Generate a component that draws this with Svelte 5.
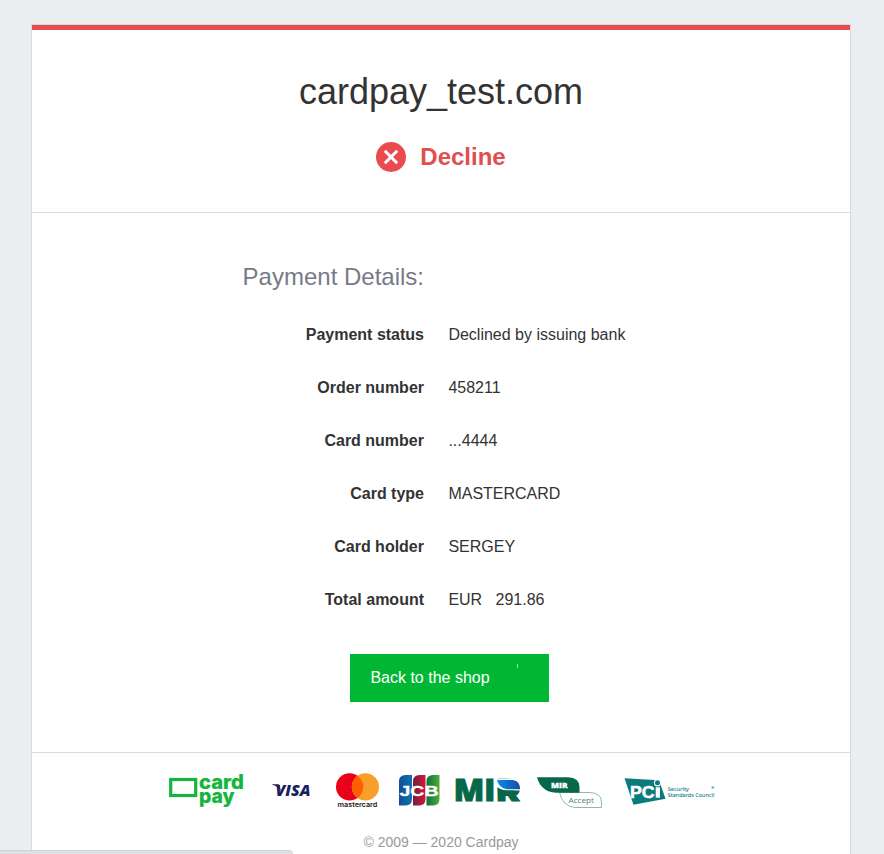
<script>
  const details = [
    ['Payment status', 'Declined by issuing bank'],
    ['Order number', '458211'],
    ['Card number', '...4444'],
    ['Card type', 'MASTERCARD'],
    ['Card holder', 'SERGEY'],
    ['Total amount', 'EUR   291.86']
  ];
</script>

<div class="page">
  <main class="card">
    <header>
      <h1>cardpay_test.com</h1>
      <div class="status">
        <svg width="30" height="30" viewBox="0 0 30 30" aria-hidden="true">
          <circle cx="15" cy="15" r="15" fill="#e94b4e" />
          <path d="M8.8 8.8 21.2 21.2M21.2 8.8 8.8 21.2" stroke="#fff" stroke-width="3" />
        </svg>
        <strong>Decline</strong>
      </div>
    </header>

    <section class="body">
      <h2>Payment Details:</h2>
      <dl>
        {#each details as [label, value]}
          <div class="row"><dt>{label}</dt><dd>{value}</dd></div>
        {/each}
      </dl>
      <button type="button">
        <span>Back to the shop</span>
        <i></i>
      </button>
    </section>

    <footer>
      <div class="logos">
        <svg width="100" height="50" viewBox="0 0 100 50" aria-label="cardpay">
          <rect x="10.7" y="14.5" width="25" height="16" fill="none" stroke="#13b53c" stroke-width="3.2" />
          <g fill="#13b53c" stroke="#13b53c" stroke-width=".2" font-family="Inter, sans-serif" font-weight="800" font-size="19.5">
            <text x="39" y="24.3" textLength="44.8" lengthAdjust="spacingAndGlyphs">card</text>
            <text x="39" y="38.3" textLength="35.5" lengthAdjust="spacingAndGlyphs">pay</text>
          </g>
        </svg>
        <svg width="65" height="50" viewBox="100 0 65 50" aria-label="Visa">
          <text x="115.5" y="31.3" textLength="35" lengthAdjust="spacingAndGlyphs" fill="#1a1f5f" font-family="Open Sans, sans-serif" font-style="italic" font-weight="800" font-size="16.6">VISA</text>
          <path d="M112.3 19.3h5.6c1 0 1.6.4 1.8 1.4l1.3 6c-1.6-3.6-4.6-6-8.7-7z" fill="#1a1f5f" />
        </svg>
        <svg width="65" height="50" viewBox="0 0 65 50" aria-label="Mastercard">
          <circle cx="24.6" cy="21.9" r="13.6" fill="#eb001b" />
          <circle cx="40.4" cy="21.9" r="13.6" fill="#f79e2b" />
          <path d="M32.5 10.8a13.6 13.6 0 0 1 0 22.2a13.6 13.6 0 0 1 0-22.2z" fill="#ff5f00" />
          <text x="12.5" y="41.7" textLength="39.8" lengthAdjust="spacingAndGlyphs" fill="#171717" font-family="Inter, sans-serif" font-weight="600" font-size="6.5">mastercard</text>
        </svg>
        <svg width="60" height="50" viewBox="65 0 60 50" aria-label="JCB">
          <defs>
            <linearGradient id="jb"><stop stop-color="#164d91" /><stop offset="1" stop-color="#0873b5" /></linearGradient>
            <linearGradient id="jr"><stop stop-color="#70213d" /><stop offset="1" stop-color="#d61638" /></linearGradient>
            <linearGradient id="jg"><stop stop-color="#08723a" /><stop offset="1" stop-color="#51ad3e" /></linearGradient>
          </defs>
          <path d="M74 16.5Q74 10 80.5 10H87V34Q87 40.5 80.5 40.5H74Z" fill="url(#jb)" />
          <path d="M88 16.5Q88 10 94.5 10H100.5V34Q100.5 40.5 94 40.5H88Z" fill="url(#jr)" />
          <path d="M101.5 16.5Q101.5 10 108 10H114.5V34Q114.5 40.5 108 40.5H101.5Z" fill="url(#jg)" />
          <text x="74.5" y="30.8" textLength="39" lengthAdjust="spacingAndGlyphs" fill="#fff" stroke="#fff" stroke-width=".3" font-family="Liberation Sans, sans-serif" font-weight="700" font-size="14.8">JCB</text>
        </svg>
        <svg width="80" height="50" viewBox="0 0 80 50" aria-label="MIR">
          <defs><linearGradient id="mir"><stop stop-color="#0a8bee" /><stop offset="1" stop-color="#154ca5" /></linearGradient></defs>
          <g fill="#07674b" stroke="#07674b" stroke-width="1" font-family="Open Sans, sans-serif" font-weight="800" font-size="29.5">
            <text x="3.8" y="36.2" textLength="41.5" lengthAdjust="spacingAndGlyphs">MI</text>
            <text x="45.5" y="36.2" textLength="23.5" lengthAdjust="spacingAndGlyphs">R</text>
          </g>
          <path d="M45.3 13.5H72V25.5H57Q50 25 47 22V24H45.3Z" fill="#fff" />
          <path d="M47 15H63Q70 16 70 24.2H57Q49 23 47 15Z" fill="url(#mir)" />
          <path d="M47.5 22.5Q51 25.6 58 25.6H69.8Q69 29.5 65.5 31H48Z" fill="#07674b" />
        </svg>
        <svg width="80" height="50" viewBox="80 0 80 50" aria-label="MIR Accept">
          <path d="M109.5 27.5H139Q151.5 27.5 151.5 37V42.5H125Q112.5 41 109.5 27.5Z" fill="#fff" stroke="#8caea4" stroke-width=".9" />
          <path d="M87 12.3H118Q129.5 13 129.5 22V27.7H106Q91 27 87 12.3Z" fill="#07674b" />
          <text x="101" y="23" textLength="16.5" lengthAdjust="spacingAndGlyphs" fill="#fff" stroke="#fff" stroke-width=".3" font-family="Open Sans, sans-serif" font-weight="800" font-size="7.6">MIR</text>
          <text x="118.5" y="37.6" textLength="25.5" lengthAdjust="spacingAndGlyphs" fill="#5b8a7c" font-family="Noto Sans, sans-serif" font-size="7.8">Accept</text>
        </svg>
        <svg width="120" height="50" viewBox="0 0 120 50" aria-label="PCI Security Standards Council">
          <path d="M14.5 13.2 49 15.2 55.5 33.7 23.5 39.7Z" fill="#087b7d" />
          <circle cx="47.5" cy="17.8" r="3.6" fill="#fff" />
          <circle cx="47.5" cy="17.8" r="2.5" fill="#087b7d" />
          <text x="20" y="33" textLength="24.5" lengthAdjust="spacingAndGlyphs" fill="#fff" stroke="#fff" stroke-width=".5" font-family="Liberation Sans, sans-serif" font-weight="700" font-size="16.5">PC</text>
          <path d="M45.7 22.3h4.3v10.4h-4.3z" fill="#fff" />
          <g fill="#208487" stroke="#208487" stroke-width=".1" font-family="Noto Sans, sans-serif" font-size="6">
            <text x="57.8" y="25.7" textLength="21" lengthAdjust="spacingAndGlyphs">Security</text>
            <text x="57.8" y="32" textLength="46.5" lengthAdjust="spacingAndGlyphs">Standards Council</text>
          </g>
          <circle cx="102.8" cy="22.5" r="1.3" fill="#6fb0b1" />
        </svg>
      </div>
      <p>© 2009 — 2020 Cardpay</p>
    </footer>
  </main>
  <div class="browser-status"></div>
</div>

<style>
  :global(body) { margin: 0; background: #eaeef1; }
  .page {
    box-sizing: border-box;
    height: 854px;
    padding: 24px 33px 0 31px;
    overflow: hidden;
    background: #eaeef1;
    color: #333;
    font: 16px/18px "Liberation Sans", Arial, sans-serif;
  }
  .card {
    box-sizing: border-box;
    width: 820px;
    height: 860px;
    border: 1px solid #d5dae1;
    background: #fff;
  }
  header {
    box-sizing: border-box;
    height: 188px;
    padding-top: 41px;
    border-top: 5px solid #e94b4e;
    border-bottom: 1px solid #d9dde0;
    text-align: center;
  }
  h1 { margin: 0 0 30px; font-size: 36px; line-height: 41px; font-weight: 400; }
  .status { display: flex; justify-content: center; align-items: center; gap: 14px; color: #e04f50; }
  .status strong { padding-bottom: 2px; font-size: 24px; line-height: 27px; }
  .body { box-sizing: border-box; height: 540px; padding-top: 50px; border-bottom: 1px solid #d9dde0; }
  h2 { width: 392px; margin: 0 0 18px; text-align: right; font-size: 24px; line-height: 27px; font-weight: 400; color: #777b87; }
  dl { margin: 0; }
  .row { display: grid; grid-template-columns: 392px 1fr; column-gap: 24.4px; height: 53px; align-items: center; }
  dt { text-align: right; font-weight: 700; }
  dd { margin: 0; white-space: pre; }
  button {
    display: flex;
    align-items: center;
    justify-content: space-between;
    width: 199px;
    height: 48px;
    margin: 28px 0 0 318px;
    padding: 0 31px 0 20.4px;
    border: 0;
    background: #00b733;
    color: #fff;
    font: inherit;
  }
  button i { width: 1px; height: 4px; margin-bottom: 24px; background: #9be0ad; }
  footer { padding-top: 12px; }
  .logos { display: flex; margin-left: 128px; }
  .logos svg { display: block; flex: none; }
  p { margin: 19px 0 0; text-align: center; font-size: 14px; line-height: 16px; color: #999; }
  .browser-status {
    position: fixed;
    left: 0;
    bottom: 0;
    box-sizing: border-box;
    width: 293px;
    height: 4px;
    border-top: 1px solid #cfd1d4;
    border-radius: 0 4px 0 0;
    background: #dfe0e3;
  }
</style>
